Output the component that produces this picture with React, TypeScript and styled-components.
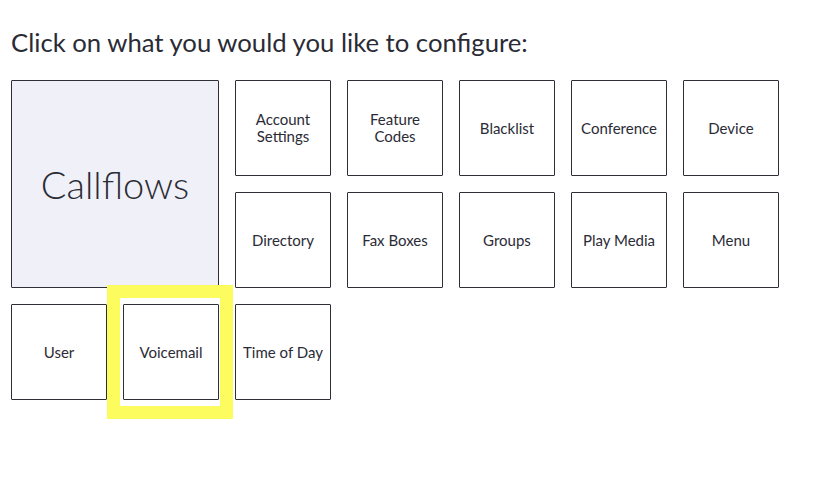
import React from "react";
import styled, { createGlobalStyle } from "styled-components";

const Global = createGlobalStyle`
  html, body { margin: 0; padding: 0; background: #ffffff; }
  body { font-family: Lato, "Open Sans", sans-serif; color: #2b2b36; }
`;

const Page = styled.div`
  box-sizing: border-box;
  min-height: 498px;
  padding: 24px 11px 40px 11px;
`;

const Title = styled.h1`
  margin: 0 0 20px 0;
  font-size: 25.7px;
  font-weight: 400;
  line-height: 36px;
  color: #2b2b36;
`;

const Grid = styled.div`
  display: grid;
  grid-template-columns: repeat(7, 96px);
  grid-auto-rows: 96px;
  gap: 16px;
`;

const Tile = styled.div<{ $big?: boolean }>`
  position: relative;
  box-sizing: border-box;
  border: 1px solid #2e2e36;
  border-radius: 1px;
  background: ${(p) => (p.$big ? "#eff0f8" : "#ffffff")};
  grid-column: ${(p) => (p.$big ? "span 2" : "auto")};
  grid-row: ${(p) => (p.$big ? "span 2" : "auto")};
  display: flex;
  align-items: center;
  justify-content: center;
  text-align: center;
  font-size: ${(p) => (p.$big ? "38px" : "15px")};
  font-weight: ${(p) => (p.$big ? 300 : 400)};
  line-height: ${(p) => (p.$big ? "40px" : "17px")};
  color: #2b2b36;
  padding: 0 4px;
`;

const Highlight = styled.div`
  position: absolute;
  top: -20px;
  left: -17px;
  right: -15px;
  bottom: -20px;
  border: 13px solid #fcfc5e;
  pointer-events: none;
`;

const items: { label: React.ReactNode; big?: boolean; highlight?: boolean }[] = [
  { label: "Callflows", big: true },
  { label: <>Account<br />Settings</> },
  { label: <>Feature<br />Codes</> },
  { label: "Blacklist" },
  { label: "Conference" },
  { label: "Device" },
  { label: "Directory" },
  { label: "Fax Boxes" },
  { label: "Groups" },
  { label: "Play Media" },
  { label: "Menu" },
  { label: "User" },
  { label: "Voicemail", highlight: true },
  { label: "Time of Day" },
];

export default function App() {
  return (
    <>
      <Global />
      <Page>
        <Title>Click on what you would you like to configure:</Title>
        <Grid>
          {items.map((it, i) => (
            <Tile key={i} $big={it.big}>
              {it.label}
              {it.highlight && <Highlight />}
            </Tile>
          ))}
        </Grid>
      </Page>
    </>
  );
}
